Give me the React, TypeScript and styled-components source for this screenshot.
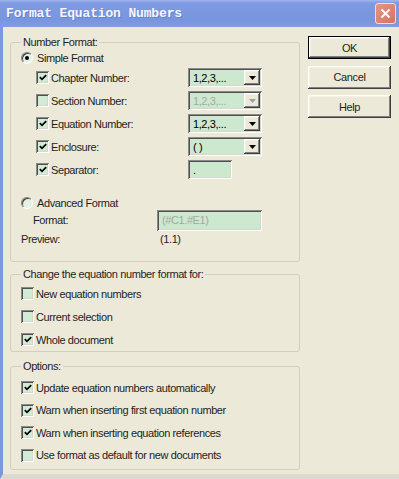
import React from 'react';
import styled, { createGlobalStyle, css } from 'styled-components';

const GlobalStyle = createGlobalStyle`
  html, body {
    margin: 0;
    padding: 0;
    background: #ece9d8;
  }
  body {
    font-family: "Liberation Sans", Arial, sans-serif;
    font-size: 11px;
    letter-spacing: -0.4px;
    color: #1e1e1e;
  }
`;

const sunken = css`
  box-shadow: inset 1px 1px #8a8a8a, inset -1px -1px #ffffff,
    inset 2px 2px #505050, inset -2px -2px #d8d6cc;
`;

const raised = css`
  box-shadow: inset -1px -1px #404040, inset 1px 1px #ffffff,
    inset -2px -2px #808080, inset 2px 2px #f4f2e8;
`;

const Window = styled.div`
  width: 399px;
  height: 479px;
  display: flex;
  flex-direction: column;
  background: #ece9d8;
  overflow: hidden;
`;

const TitleBar = styled.div`
  height: 27px;
  flex: none;
  display: flex;
  align-items: center;
  padding-left: 6px;
  background: linear-gradient(#a3b7ee 0, #7e9ae2 3px, #7895df 20px, #819ce1 27px);
`;

const Title = styled.span`
  font-family: "Liberation Mono", "Courier New", monospace;
  font-weight: bold;
  font-size: 13px;
  letter-spacing: -0.15px;
  color: #f4f6fc;
  text-shadow: 1px 1px #6680c4;
`;

const CloseButton = styled.span`
  margin-left: auto;
  margin-right: 3px;
  width: 21px;
  height: 21px;
  box-sizing: border-box;
  border: 1px solid #f3dcd8;
  border-radius: 3px;
  background: linear-gradient(135deg, #e59684, #d6735f);
  display: flex;
  align-items: center;
  justify-content: center;
`;

const Frame = styled.div`
  flex: 1;
  display: flex;
  padding: 9px 0 0 7px;
  border-left: 3px solid #7b97df;
  border-bottom: 5px solid #dcdad0;
`;

const MainColumn = styled.div`
  width: 290px;
  display: flex;
  flex-direction: column;
`;

const SideColumn = styled.div`
  margin-left: 8px;
  display: flex;
  flex-direction: column;
  gap: 6.5px;
`;

const Group = styled.fieldset<{ $top?: number }>`
  margin: ${p => p.$top ?? 0}px 0 0;
  padding: 0;
  min-width: 0;
  border: 1px solid #d0d0bf;
  border-radius: 3px;
`;

const Legend = styled.legend`
  margin-left: 10px;
  padding: 0 2px;
  line-height: 13px;
`;

const GroupBody = styled.div<{ $pad: string }>`
  padding: ${p => p.$pad};
  display: flex;
  flex-direction: column;
`;

const Row = styled.div<{ $h: number; $indent?: number; $top?: number }>`
  height: ${p => p.$h}px;
  margin-top: ${p => p.$top ?? 0}px;
  padding-left: ${p => p.$indent ?? 0}px;
  display: flex;
  align-items: center;
`;

const LabelCell = styled.div<{ $w: number }>`
  width: ${p => p.$w}px;
  flex: none;
  display: flex;
  align-items: center;
  gap: 2px;
`;

const Box = styled.span`
  width: 13px;
  height: 13px;
  flex: none;
  background: #d0ecd5;
  ${sunken};
  display: flex;
  align-items: center;
  justify-content: center;
`;

const RadioCircle = styled.span`
  width: 12px;
  height: 12px;
  flex: none;
  box-sizing: border-box;
  border-radius: 50%;
  border: 1px solid;
  border-color: #808080 #ffffff #ffffff #808080;
  background: #e4f2e6;
  box-shadow: inset 1px 1px #404040;
  display: flex;
  align-items: center;
  justify-content: center;
  margin-right: 2px;
`;

const Dot = styled.span`
  width: 4px;
  height: 4px;
  border-radius: 50%;
  background: #000;
`;

const Field = styled.div<{ $w: number; $h: number }>`
  width: ${p => p.$w}px;
  height: ${p => p.$h}px;
  box-sizing: border-box;
  padding: 2px;
  background: #cce8cf;
  ${sunken};
  display: flex;
  align-items: center;
`;

const FieldText = styled.span<{ $disabled?: boolean }>`
  flex: 1;
  padding-left: 3px;
  color: ${p => (p.$disabled ? '#a3aaa3' : '#000')};
  white-space: nowrap;
  overflow: hidden;
`;

const DropButton = styled.span`
  width: 16px;
  height: 15px;
  flex: none;
  background: #ece9d8;
  ${raised};
  display: flex;
  align-items: center;
  justify-content: center;
`;

const Button = styled.div<{ $default?: boolean }>`
  width: 83px;
  height: 23px;
  box-sizing: border-box;
  background: #ece9d8;
  display: flex;
  align-items: center;
  justify-content: center;
  ${raised};
  ${p => p.$default && css`
    border: 1px solid #000;
  `}
`;

const Tick = () => (
  <svg width="8" height="7" viewBox="0 0 8 7">
    <path d="M0.8 3.2 L3 5.4 L7.2 1.2" fill="none" stroke="#000" strokeWidth="1.7" />
  </svg>
);

const Arrow = ({ disabled }: { disabled?: boolean }) => (
  <svg width="7" height="4" viewBox="0 0 7 4">
    <polygon points="0,0 7,0 3.5,4" fill={disabled ? '#a0a0a0' : '#000'} />
  </svg>
);

const Check = ({ checked, label, w }: { checked?: boolean; label: string; w?: number }) => (
  <LabelCell $w={w ?? 250}>
    <Box>{checked && <Tick />}</Box>
    <span>{label}</span>
  </LabelCell>
);

const Radio = ({ on, label }: { on?: boolean; label: string }) => (
  <LabelCell $w={200}>
    <RadioCircle>{on && <Dot />}</RadioCircle>
    <span>{label}</span>
  </LabelCell>
);

const Combo = ({ value, disabled }: { value: string; disabled?: boolean }) => (
  <Field $w={74} $h={19}>
    <FieldText $disabled={disabled}>{value}</FieldText>
    <DropButton>
      <Arrow disabled={disabled} />
    </DropButton>
  </Field>
);

const formatRows = [
  { label: 'Chapter Number:', checked: true, value: '1,2,3,...' },
  { label: 'Section Number:', checked: false, value: '1,2,3,...', disabled: true },
  { label: 'Equation Number:', checked: true, value: '1,2,3,...' },
  { label: 'Enclosure:', checked: true, value: '( )' },
];

const scopeRows = [
  { label: 'New equation numbers', checked: false },
  { label: 'Current selection', checked: false },
  { label: 'Whole document', checked: true },
];

const optionRows = [
  { label: 'Update equation numbers automatically', checked: true },
  { label: 'Warn when inserting first equation number', checked: true },
  { label: 'Warn when inserting equation references', checked: true },
  { label: 'Use format as default for new documents', checked: false },
];

const App: React.FC = () => {
  return (
    <Window>
      <GlobalStyle />
      <TitleBar>
        <Title>Format Equation Numbers</Title>
        <CloseButton>
          <svg width="11" height="11" viewBox="0 0 11 11">
            <path d="M1.5 1.5 L9.5 9.5 M9.5 1.5 L1.5 9.5" stroke="#fff" strokeWidth="2" />
          </svg>
        </CloseButton>
      </TitleBar>
      <Frame>
        <MainColumn>
          <Group>
            <Legend>Number Format:</Legend>
            <GroupBody $pad="1px 0 14px 10px">
              <Row $h={16}>
                <Radio on label="Simple Format" />
              </Row>
              {formatRows.map((r, i) => (
                <Row key={i} $h={23} $indent={15}>
                  <Check checked={r.checked} label={r.label} w={152} />
                  <Combo value={r.value} disabled={r.disabled} />
                </Row>
              ))}
              <Row $h={23} $indent={15}>
                <Check checked label="Separator:" w={152} />
                <Field $w={44} $h={19}>
                  <FieldText>.</FieldText>
                </Field>
              </Row>
              <Row $h={14} $top={15}>
                <Radio label="Advanced Format" />
              </Row>
              <Row $h={20} $indent={12}>
                <LabelCell $w={124}>Format:</LabelCell>
                <Field $w={105} $h={21}>
                  <FieldText $disabled>(#C1.#E1)</FieldText>
                </Field>
              </Row>
              <Row $h={16} $indent={-3} $top={1}>
                <LabelCell $w={139}>Preview:</LabelCell>
                <span>(1.1)</span>
              </Row>
            </GroupBody>
          </Group>

          <Group $top={6}>
            <Legend>Change the equation number format for:</Legend>
            <GroupBody $pad="1px 0 0 10px">
              {scopeRows.map((r, i) => (
                <Row key={i} $h={23}>
                  <Check checked={r.checked} label={r.label} />
                </Row>
              ))}
            </GroupBody>
          </Group>

          <Group $top={8}>
            <Legend>Options:</Legend>
            <GroupBody $pad="3.5px 0 2.5px 10px">
              {optionRows.map((r, i) => (
                <Row key={i} $h={22.5}>
                  <Check checked={r.checked} label={r.label} />
                </Row>
              ))}
            </GroupBody>
          </Group>
        </MainColumn>

        <SideColumn>
          <Button $default>OK</Button>
          <Button>Cancel</Button>
          <Button>Help</Button>
        </SideColumn>
      </Frame>
    </Window>
  );
};

export default App;
